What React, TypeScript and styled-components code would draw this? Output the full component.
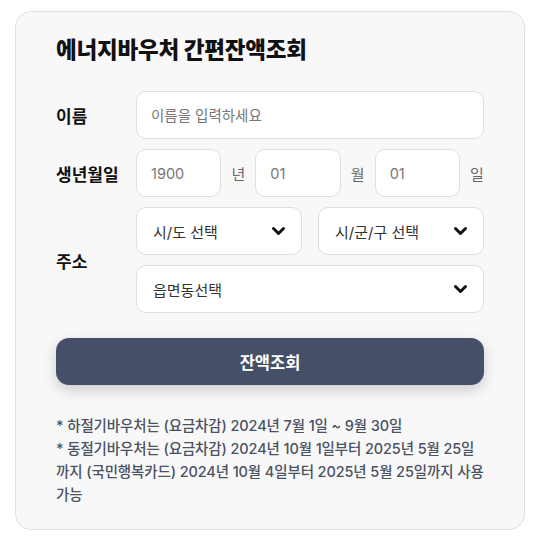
import React from "react";
import styled, { createGlobalStyle } from "styled-components";

const GlobalStyle = createGlobalStyle`
  * { box-sizing: border-box; }
  body {
    margin: 0;
    background: #ffffff;
    font-family: Inter, "Noto Sans CJK KR", "Noto Sans", sans-serif;
  }
`;

const Page = styled.div`
  padding: 11px 18px 15px 15px;
`;

const Card = styled.div`
  width: 510px;
  background: #f8f8f8;
  border: 1px solid #e1e1e1;
  border-radius: 16px;
  padding: 23px 40px 23px;
`;

const Title = styled.h1`
  margin: 0 0 26px;
  font-size: 22.5px;
  line-height: 30px;
  font-weight: 800;
  color: #111111;
  letter-spacing: -0.2px;
`;

const Form = styled.div`
  display: flex;
  flex-direction: column;
  gap: 10px;
`;

const Row = styled.div`
  display: grid;
  grid-template-columns: 80px 1fr;
  align-items: center;
`;

const Label = styled.div`
  font-size: 17px;
  font-weight: 700;
  color: #111111;
`;

const Field = styled.input`
  height: 48px;
  width: 100%;
  min-width: 0;
  border: 1px solid #dedede;
  border-radius: 10px;
  background: #ffffff;
  padding: 0 14px;
  font-family: inherit;
  font-size: 14.5px;
  color: #666666;
  outline: none;
  &::placeholder { color: #777777; }
`;

const DateRow = styled.div`
  display: flex;
  align-items: center;
  gap: 10px;
`;

const DateField = styled(Field)`
  flex: 1;
`;

const Unit = styled.span`
  width: 14px;
  font-size: 15px;
  color: #666666;
  text-align: center;
`;

const SelectStack = styled.div`
  display: flex;
  flex-direction: column;
  gap: 10px;
`;

const SelectPair = styled.div`
  display: grid;
  grid-template-columns: 1fr 1fr;
  gap: 16px;
`;

const Select = styled.div`
  height: 48px;
  border: 1px solid #dedede;
  border-radius: 10px;
  background: #ffffff;
  padding: 0 15px 0 16px;
  display: flex;
  align-items: center;
  justify-content: space-between;
  font-size: 15px;
  color: #333333;
`;

const Button = styled.button`
  margin-top: 25px;
  width: 100%;
  height: 47px;
  border: none;
  border-radius: 13px;
  background: #454f67;
  color: #ffffff;
  font-family: inherit;
  font-size: 16.5px;
  font-weight: 700;
  box-shadow: 0 5px 14px rgba(0, 0, 0, 0.18);
`;

const Notes = styled.div`
  margin-top: 29px;
  font-size: 14.5px;
  line-height: 23px;
  font-weight: 500;
  color: #4a5263;
  letter-spacing: -0.12px;
`;

const Note = styled.p`
  margin: 0;
`;

const Chevron = () => (
  <svg width="15" height="10" viewBox="0 0 15 10" aria-hidden="true">
    <polyline
      points="2.5,2.5 7.5,7.5 12.5,2.5"
      fill="none"
      stroke="#111111"
      strokeWidth="3"
      strokeLinecap="round"
      strokeLinejoin="round"
    />
  </svg>
);

export default function App() {
  return (
    <>
      <GlobalStyle />
      <Page>
        <Card>
          <Title>에너지바우처 간편잔액조회</Title>
          <Form>
            <Row>
              <Label>이름</Label>
              <Field placeholder="이름을 입력하세요" />
            </Row>
            <Row>
              <Label>생년월일</Label>
              <DateRow>
                <DateField placeholder="1900" />
                <Unit>년</Unit>
                <DateField placeholder="01" />
                <Unit>월</Unit>
                <DateField placeholder="01" />
                <Unit>일</Unit>
              </DateRow>
            </Row>
            <Row>
              <Label>주소</Label>
              <SelectStack>
                <SelectPair>
                  <Select>
                    시/도 선택
                    <Chevron />
                  </Select>
                  <Select>
                    시/군/구 선택
                    <Chevron />
                  </Select>
                </SelectPair>
                <Select>
                  읍면동선택
                  <Chevron />
                </Select>
              </SelectStack>
            </Row>
          </Form>
          <Button>잔액조회</Button>
          <Notes>
            <Note>* 하절기바우처는 (요금차감) 2024년 7월 1일 ~ 9월 30일</Note>
            <Note>
              * 동절기바우처는 (요금차감) 2024년 10월 1일부터 2025년 5월 25일까지 (국민행복카드) 2024년 10월 4일부터 2025년 5월 25일까지 사용 가능
            </Note>
          </Notes>
        </Card>
      </Page>
    </>
  );
}
